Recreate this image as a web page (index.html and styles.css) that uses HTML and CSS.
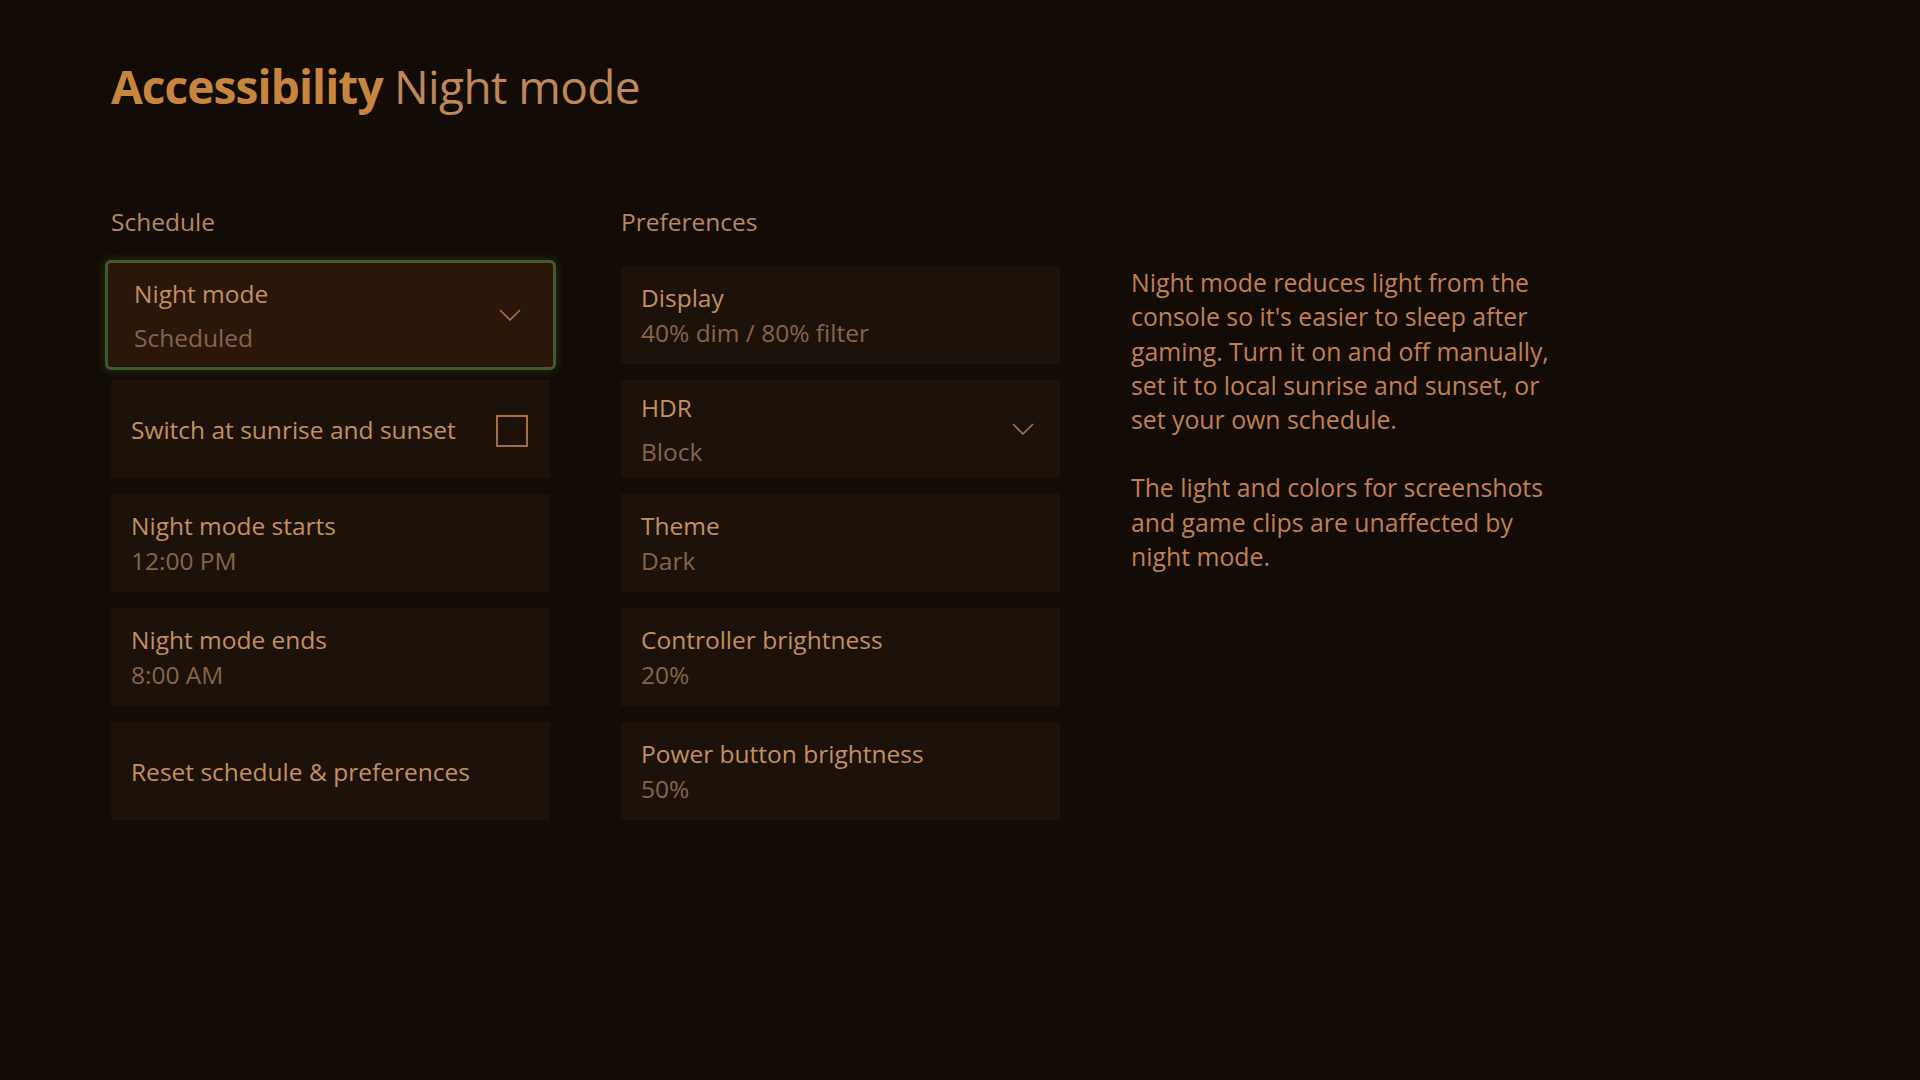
FILE: index.html
```html
<!DOCTYPE html>
<html lang="en">
<head>
<meta charset="utf-8">
<title>Accessibility Night mode</title>
<link rel="stylesheet" href="styles.css">
</head>
<body>
<main class="page">
  <h1 class="page-title"><span class="crumb">Accessibility</span> Night mode</h1>
  <div class="content">
    <section class="column">
      <h2 class="section-label">Schedule</h2>
      <div class="card-list">
        <div class="card card-dropdown card-focused">
          <div class="card-text">
            <div class="card-title">Night mode</div>
            <div class="card-value">Scheduled</div>
          </div>
          <svg class="chevron" viewBox="0 0 22 12" aria-hidden="true"><path d="M1 1 L11 11 L21 1"/></svg>
        </div>
        <div class="card card-single">
          <div class="card-title">Switch at sunrise and sunset</div>
          <span class="checkbox"></span>
        </div>
        <div class="card">
          <div class="card-text">
            <div class="card-title">Night mode starts</div>
            <div class="card-value">12:00 PM</div>
          </div>
        </div>
        <div class="card">
          <div class="card-text">
            <div class="card-title">Night mode ends</div>
            <div class="card-value">8:00 AM</div>
          </div>
        </div>
        <div class="card card-single">
          <div class="card-title">Reset schedule &amp; preferences</div>
        </div>
      </div>
    </section>
    <section class="column">
      <h2 class="section-label">Preferences</h2>
      <div class="card-list">
        <div class="card">
          <div class="card-text">
            <div class="card-title">Display</div>
            <div class="card-value">40% dim / 80% filter</div>
          </div>
        </div>
        <div class="card card-dropdown">
          <div class="card-text">
            <div class="card-title">HDR</div>
            <div class="card-value">Block</div>
          </div>
          <svg class="chevron" viewBox="0 0 22 12" aria-hidden="true"><path d="M1 1 L11 11 L21 1"/></svg>
        </div>
        <div class="card">
          <div class="card-text">
            <div class="card-title">Theme</div>
            <div class="card-value">Dark</div>
          </div>
        </div>
        <div class="card">
          <div class="card-text">
            <div class="card-title">Controller brightness</div>
            <div class="card-value">20%</div>
          </div>
        </div>
        <div class="card">
          <div class="card-text">
            <div class="card-title">Power button brightness</div>
            <div class="card-value">50%</div>
          </div>
        </div>
      </div>
    </section>
    <aside class="description">
      <p>Night mode reduces light from the<br>console so it's easier to sleep after<br>gaming. Turn it on and off manually,<br>set it to local sunrise and sunset, or<br>set your own schedule.</p>
      <p>The light and colors for screenshots<br>and game clips are unaffected by<br>night mode.</p>
    </aside>
  </div>
</main>
</body>
</html>
```

FILE: styles.css
```css
html, body {
  margin: 0;
  padding: 0;
}

body {
  width: 1920px;
  height: 1080px;
  background: #120b06;
  font-family: "Open Sans", "Noto Sans", sans-serif;
  color: #c3915f;
  overflow: hidden;
}

.page {
  padding: 56px 0 0 111px;
}

.page-title {
  margin: 0;
  font-size: 46px;
  font-weight: 400;
  line-height: 60px;
  color: #bf8858;
  letter-spacing: -0.6px;
}

.crumb {
  font-weight: 700;
  color: #c8853d;
  letter-spacing: -0.9px;
}

.content {
  display: flex;
  align-items: flex-start;
  margin-top: 90px;
}

.column {
  width: 439px;
  margin-right: 71px;
}

.section-label {
  margin: 0 0 28px 0;
  font-size: 24.5px;
  font-weight: 400;
  line-height: 32px;
  color: #b9875c;
}

.card-list {
  display: flex;
  flex-direction: column;
  gap: 16px;
}

.card {
  height: 98px;
  box-sizing: border-box;
  background: #1c1209;
  display: flex;
  align-items: center;
  justify-content: space-between;
  padding: 0 22px 0 20px;
}

.card-text {
  display: flex;
  flex-direction: column;
}

.card-title {
  font-size: 24.5px;
  line-height: 35px;
  color: #c3905e;
}

.card-value {
  font-size: 24.5px;
  line-height: 35px;
  color: #876548;
}

.card-dropdown .card-text {
  gap: 9px;
}

.card-dropdown {
  padding-right: 26px;
}

.card-focused {
  background: #2a1709;
  margin: -6px;
  height: 110px;
  padding: 0 32px 0 26px;
  border: 3px solid #3f5c2d;
  border-radius: 6px;
  box-shadow: 0 0 10px 1px rgba(70, 110, 40, 0.35);
}

.chevron {
  width: 22px;
  height: 12px;
  fill: none;
  stroke: #a87348;
  stroke-width: 1.6;
}

.checkbox {
  width: 32px;
  height: 32px;
  margin-top: 4px;
  box-sizing: border-box;
  border: 2px solid #a26f42;
}

.description {
  width: 460px;
  margin-top: 59px;
  margin-left: 0;
  font-size: 24.8px;
  line-height: 34.3px;
  color: #c1804f;
}

.description p {
  margin: 0 0 34px 0;
}
```
